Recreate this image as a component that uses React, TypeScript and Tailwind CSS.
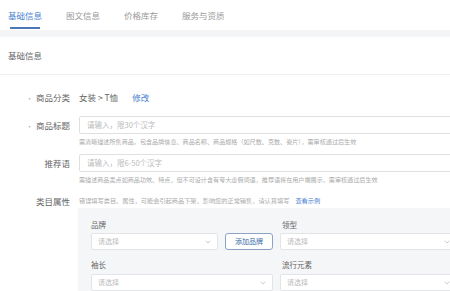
import { ChevronDown } from 'lucide-react';

const tabs = ['基础信息', '图文信息', '价格库存', '服务与资质'];

function Select({ className = '' }: { className?: string }) {
  return (
    <div
      className={`h-[17px] bg-white border border-[#e2e4e8] rounded-[2px] flex items-center justify-between pl-[6px] pr-[5px] text-[7px] text-[#bbbbbb] ${className}`}
    >
      <span>请选择</span>
      <ChevronDown size={8} strokeWidth={1.5} className="text-[#999]" />
    </div>
  );
}

function Label({ text, required }: { text: string; required?: boolean }) {
  return (
    <div className="text-right text-[8.5px] leading-[12px] text-[#666]">
      {required && <span className="text-[#aaa] text-[7px] mr-[3px]">•</span>}
      {text}
    </div>
  );
}

export default function App() {
  return (
    <div
      className="w-[450px] h-[291px] overflow-hidden bg-white text-[#444]"
      style={{ fontFamily: '"Noto Sans CJK SC", "Noto Sans", sans-serif' }}
    >
      <div className="h-[30px] flex items-end gap-6 px-2">
        {tabs.map((t, i) => (
          <div key={t} className="flex flex-col pb-px">
            <span className={`text-[8.5px] leading-[12px] ${i === 0 ? 'text-[#4a82cf]' : 'text-[#999]'}`}>{t}</span>
            <div className={`mt-[6px] mx-[2px] h-[2px] ${i === 0 ? 'bg-[#4a78b5]' : 'bg-transparent'}`} />
          </div>
        ))}
      </div>
      <div className="h-[7px] bg-[#f4f5f7]" />

      <div className="h-[38px] flex items-center px-2 border-b border-[#eeeeee] text-[8.5px] text-[#666]">
        基础信息
      </div>

      <div className="grid grid-cols-[70px_1fr] gap-x-[9px] items-start pr-px">
        <div className="mt-[16px]"><Label text="商品分类" required /></div>
        <div className="mt-[16px] text-[8.5px] leading-[12px] text-[#666] flex">
          <span>女装 &gt; T恤</span>
          <span className="ml-[14px] text-[#4a7fcf]">修改</span>
        </div>

        <div className="mt-[15px]"><Label text="商品标题" required /></div>
        <div className="mt-[12px]">
          <div className="h-[18px] border border-[#e0e0e0] rounded-[2px] flex items-center pl-[7px] text-[7.5px] text-[#bbbbbb]">
            请输入，限30个汉字
          </div>
          <div className="mt-[3px] text-[6.1px] leading-[10px] text-[#aaaaaa] whitespace-nowrap">
            需清晰描述所售商品，包含品牌信息、商品名称、商品规格（如尺数、克数、瓷片），需审核通过后生效
          </div>
        </div>

        <div className="mt-[10px]"><Label text="推荐语" /></div>
        <div className="mt-[7px]">
          <div className="h-[18px] border border-[#e0e0e0] rounded-[2px] flex items-center pl-[7px] text-[7.5px] text-[#bbbbbb]">
            请输入，限6-50个汉字
          </div>
          <div className="mt-[3px] text-[6.1px] leading-[10px] text-[#aaaaaa] whitespace-nowrap">
            需描述商品卖点如商品功效、特点，但不可设计含有夸大虚假词语，推荐语将在用户端展示，需审核通过后生效
          </div>
        </div>

        <div className="mt-[10px]"><Label text="类目属性" /></div>
        <div className="mt-[10px] -mr-px">
          <div className="text-[6.2px] leading-[12px] text-[#aaaaaa] whitespace-nowrap">
            错误填写类目、属性，可能会引起商品下架，影响您的正常销售，请认真填写
            <span className="ml-[6px] text-[#4a7fcf]">查看示例</span>
          </div>
          <div className="mt-px -ml-px bg-[#f5f6f8] pl-[13px] pt-[11px] pb-3 overflow-hidden">
            <div className="grid grid-cols-[127px_48px_177px] gap-x-[7px] w-max">
              <div className="text-[7.5px] leading-[12px] text-[#666]">品牌</div>
              <div />
              <div className="text-[7.5px] leading-[12px] text-[#666] pl-[2px]">领型</div>

              <Select className="mt-[2px]" />
              <div className="mt-[2px] h-[17px] bg-white border border-[#8da3c4] rounded-[3px] flex items-center justify-center text-[7px] text-[#3a68a8]">
                添加品牌
              </div>
              <Select className="mt-[2px]" />

              <div className="mt-[9px] col-span-2 text-[7.5px] leading-[12px] text-[#666]">袖长</div>
              <div className="mt-[9px] text-[7.5px] leading-[12px] text-[#666] pl-[2px]">流行元素</div>

              <Select className="mt-[3px] col-span-2" />
              <Select className="mt-[3px]" />
            </div>
          </div>
        </div>
      </div>
    </div>
  );
}
